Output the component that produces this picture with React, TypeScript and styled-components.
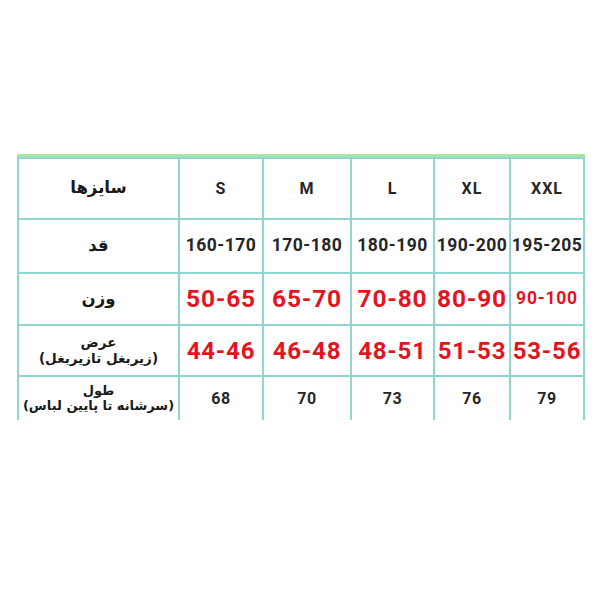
import React from "react";
import styled, { createGlobalStyle } from "styled-components";

const Global = createGlobalStyle`
  html, body { margin: 0; padding: 0; background: #ffffff; }
  body { font-family: Roboto, "DejaVu Sans", sans-serif; }
`;

const LINE = "#8fd6d3";

const Page = styled.div`
  width: 600px;
  height: 600px;
  box-sizing: border-box;
  padding: 154px 0 0 17px;
  background: #fff;
`;

const Table = styled.div`
  display: grid;
  width: 568px;
  grid-template-columns: 161px 84px 88px 83px 76px 76px;
  grid-template-rows: 61px 54px 52px 51px 45px;
  border-top: 3px solid #a9e6a6;
  box-sizing: border-box;
`;

const Cell = styled.div<{ $last?: boolean }>`
  display: flex;
  flex-direction: column;
  align-items: center;
  justify-content: center;
  border-top: 2px solid ${LINE};
  border-left: 2px solid ${LINE};
  border-right: ${(p) => (p.$last ? `2px solid ${LINE}` : "none")};
  box-sizing: border-box;
  text-align: center;
  white-space: nowrap;
`;

const Label = styled.div<{ $size: number }>`
  font-family: "DejaVu Sans", sans-serif;
  font-weight: 700;
  font-size: ${(p) => p.$size}px;
  line-height: 1.15;
  color: #1a1a1a;
  direction: rtl;
`;

const Value = styled.span<{ $size: number; $red?: boolean; $spacing?: number }>`
  font-family: Roboto, "DejaVu Sans", sans-serif;
  font-weight: 700;
  font-size: ${(p) => p.$size}px;
  letter-spacing: ${(p) => p.$spacing ?? 0.6}px;
  color: ${(p) => (p.$red ? "#e3141f" : "#262626")};
  line-height: 1;
`;

type Row = {
  label: string[];
  labelSize: number;
  values: string[];
  size: number | number[];
  red?: boolean;
  spacing?: number;
};

const rows: Row[] = [
  { label: ["سایزها"], labelSize: 16.5, values: ["S", "M", "L", "XL", "XXL"], size: 16, spacing: 1 },
  { label: ["قد"], labelSize: 16.5, values: ["160-170", "170-180", "180-190", "190-200", "195-205"], size: 17.5, spacing: 0.5 },
  { label: ["وزن"], labelSize: 16.5, values: ["50-65", "65-70", "70-80", "80-90", "90-100"], size: [24.5, 24.5, 24.5, 24.5, 17.5], red: true, spacing: 0.8 },
  { label: ["عرض", "(زیربغل تازیربغل)"], labelSize: 13.5, values: ["44-46", "46-48", "48-51", "51-53", "53-56"], size: 24, red: true, spacing: 0.8 },
  { label: ["طول", "(سرشانه تا پایین لباس)"], labelSize: 13, values: ["68", "70", "73", "76", "79"], size: 16, spacing: 0.5 },
];

export default function App() {
  return (
    <>
      <Global />
      <Page>
        <Table>
          {rows.map((r, ri) => (
            <React.Fragment key={ri}>
              <Cell>
                {r.label.map((l, li) => (
                  <Label key={li} $size={r.labelSize} dir="rtl">
                    {l}
                  </Label>
                ))}
              </Cell>
              {r.values.map((v, vi) => (
                <Cell key={vi} $last={vi === r.values.length - 1}>
                  <Value
                    $size={Array.isArray(r.size) ? r.size[vi] : r.size}
                    $red={r.red}
                    $spacing={r.spacing}
                  >
                    {v}
                  </Value>
                </Cell>
              ))}
            </React.Fragment>
          ))}
        </Table>
      </Page>
    </>
  );
}
